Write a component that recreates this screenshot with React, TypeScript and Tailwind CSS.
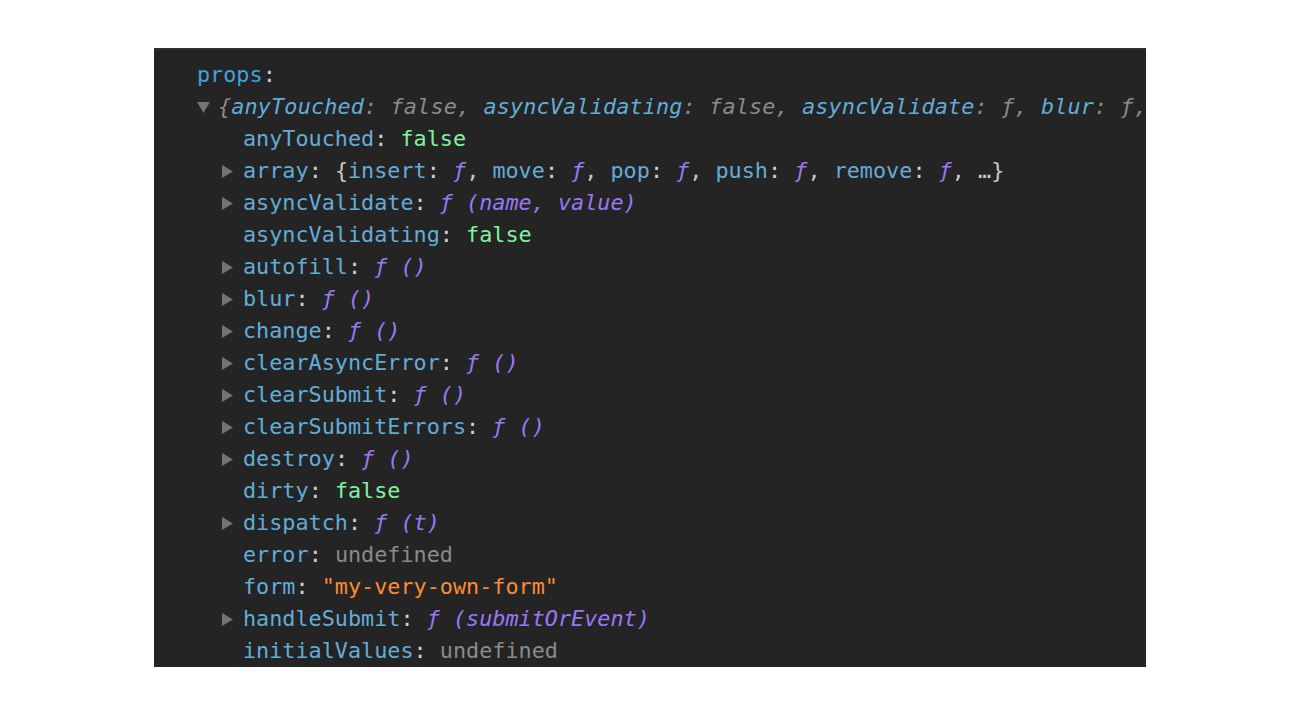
import React from "react";

const KEY = "text-[#62acd8]";
const COLON = "text-[#d0d0d0]";
const FN = "text-[#9a78f5] italic";
const GREEN = "text-[#80f3a0]";
const GRAY = "text-[#8a8a8a]";
const ORANGE = "text-[#fb8b36]";

function Tri({ open }: { open?: boolean }) {
  return (
    <span className="inline-flex w-[21px] h-[32px] items-center shrink-0">
      {open ? (
        <svg width="13" height="11" viewBox="0 0 13 11">
          <polygon points="0,0 13,0 6.5,11" fill="#747474" />
        </svg>
      ) : (
        <svg width="11" height="13" viewBox="0 0 11 13">
          <polygon points="0,0 11,6.5 0,13" fill="#747474" />
        </svg>
      )}
    </span>
  );
}

function Row({ arrow, children }: { arrow?: boolean; children: React.ReactNode }) {
  return (
    <div className="flex items-center h-[32px] pl-[25px] whitespace-pre">
      {arrow ? <Tri /> : <span className="inline-block w-[21px] shrink-0" />}
      <span>{children}</span>
    </div>
  );
}

function Fn({ k, args }: { k: string; args: string }) {
  return (
    <Row arrow>
      <span className={KEY}>{k}</span>
      <span className={COLON}>: </span>
      <span className={FN}>ƒ {args}</span>
    </Row>
  );
}

export default function App() {
  return (
    <div className="w-[1300px] h-[715px] bg-white pt-[48px] flex justify-center">
      <div
        className="w-[992px] h-[619px] bg-[#242424] border-t-2 border-[#303030] overflow-hidden pl-[43px] pt-[10px] text-[21.8px]"
        style={{ fontFamily: '"DejaVu Sans Mono", monospace' }}
      >
        <div className="h-[31px] flex items-center text-[#3fa3dc]">
          <span>
            props<span className={COLON}>:</span>
          </span>
        </div>
        <div className="flex items-center h-[32px] whitespace-pre italic tracking-[0.15px]">
          <Tri open />
          <span>
            <span className={GRAY}>{"{"}</span>
            <span className={KEY}>anyTouched</span>
            <span className={GRAY}>: false, </span>
            <span className={KEY}>asyncValidating</span>
            <span className={GRAY}>: false, </span>
            <span className={KEY}>asyncValidate</span>
            <span className={GRAY}>: ƒ, </span>
            <span className={KEY}>blur</span>
            <span className={GRAY}>: ƒ,</span>
          </span>
        </div>
        <Row>
          <span className={KEY}>anyTouched</span>
          <span className={COLON}>: </span>
          <span className={GREEN}>false</span>
        </Row>
        <Row arrow>
          <span className={KEY}>array</span>
          <span className={COLON}>: </span>
          <span className="text-[#c8c8c8]">{"{"}</span>
          <span className={KEY}>insert</span>
          <span className={COLON}>: </span>
          <span className={FN}>ƒ</span>
          <span className="text-[#c8c8c8]">, </span>
          <span className={KEY}>move</span>
          <span className={COLON}>: </span>
          <span className={FN}>ƒ</span>
          <span className="text-[#c8c8c8]">, </span>
          <span className={KEY}>pop</span>
          <span className={COLON}>: </span>
          <span className={FN}>ƒ</span>
          <span className="text-[#c8c8c8]">, </span>
          <span className={KEY}>push</span>
          <span className={COLON}>: </span>
          <span className={FN}>ƒ</span>
          <span className="text-[#c8c8c8]">, </span>
          <span className={KEY}>remove</span>
          <span className={COLON}>: </span>
          <span className={FN}>ƒ</span>
          <span className="text-[#c8c8c8]">, …{"}"}</span>
        </Row>
        <Fn k="asyncValidate" args="(name, value)" />
        <Row>
          <span className={KEY}>asyncValidating</span>
          <span className={COLON}>: </span>
          <span className={GREEN}>false</span>
        </Row>
        <Fn k="autofill" args="()" />
        <Fn k="blur" args="()" />
        <Fn k="change" args="()" />
        <Fn k="clearAsyncError" args="()" />
        <Fn k="clearSubmit" args="()" />
        <Fn k="clearSubmitErrors" args="()" />
        <Fn k="destroy" args="()" />
        <Row>
          <span className={KEY}>dirty</span>
          <span className={COLON}>: </span>
          <span className={GREEN}>false</span>
        </Row>
        <Fn k="dispatch" args="(t)" />
        <Row>
          <span className={KEY}>error</span>
          <span className={COLON}>: </span>
          <span className={GRAY}>undefined</span>
        </Row>
        <Row>
          <span className={KEY}>form</span>
          <span className={COLON}>: </span>
          <span className={ORANGE}>"my-very-own-form"</span>
        </Row>
        <Fn k="handleSubmit" args="(submitOrEvent)" />
        <Row>
          <span className={KEY}>initialValues</span>
          <span className={COLON}>: </span>
          <span className={GRAY}>undefined</span>
        </Row>
      </div>
    </div>
  );
}
